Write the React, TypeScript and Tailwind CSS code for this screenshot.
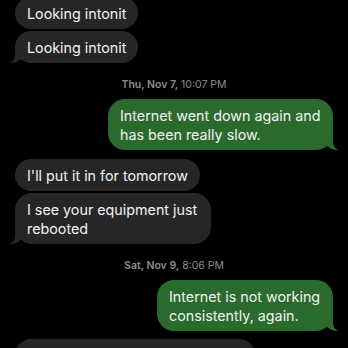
import React from 'react';

type Msg =
  | { kind: 'in' | 'out'; text: string; tail?: boolean; gap?: string; w?: string }
  | { kind: 'time'; day: string; time: string; gap?: string };

const messages: Msg[] = [
  { kind: 'in', text: 'Looking intonit' },
  { kind: 'in', text: 'Looking intonit', tail: true, gap: 'mt-[2px]' },
  { kind: 'time', day: 'Thu, Nov 7,', time: '10:07 PM', gap: 'mt-[15px]' },
  { kind: 'out', text: 'Internet went down again and has been really slow.', tail: true, gap: 'mt-[7px]', w: 'w-[225px]' },
  { kind: 'in', text: "I'll put it in for tomorrow", gap: 'mt-[9px]' },
  { kind: 'in', text: 'I see your equipment just rebooted', tail: true, gap: 'mt-[2px]', w: 'w-[196px]' },
  { kind: 'time', day: 'Sat, Nov 9,', time: '8:06 PM', gap: 'mt-[15px]' },
  { kind: 'out', text: 'Internet is not working consistently, again.', tail: true, gap: 'mt-[7px]', w: 'w-[176px]' },
];

const TailLeft = () => (
  <svg className="absolute -left-[5px] bottom-0 h-[16px] w-[16px]" viewBox="0 0 16 16">
    <path d="M5 0 L5 8 C5 12 3 14 0 16 C5 16 9 14 12 11 L16 0 Z" fill="#262628" />
  </svg>
);

const TailRight = () => (
  <svg className="absolute -right-[5px] bottom-0 h-[16px] w-[16px]" viewBox="0 0 16 16">
    <path d="M11 0 L11 8 C11 12 13 14 16 16 C11 16 7 14 4 11 L0 0 Z" fill="#2b6a2d" />
  </svg>
);

export default function App() {
  return (
    <div
      className="h-[348px] w-[348px] overflow-hidden bg-black"
      style={{ fontFamily: 'Inter, "Noto Sans", sans-serif' }}
    >
      <div className="-mt-[3px] flex flex-col px-[15px]">
        {messages.map((m, i) => {
          if (m.kind === 'time') {
            return (
              <div key={i} className={`${m.gap} text-center text-[10.5px] leading-[14px] text-[#8d8d92]`}>
                <span className="font-semibold">{m.day}</span> {m.time}
              </div>
            );
          }
          const out = m.kind === 'out';
          return (
            <div key={i} className={`${m.gap ?? ''} flex ${out ? 'justify-end' : 'justify-start'}`}>
              <div
                className={`relative ${m.w ?? 'max-w-[226px]'} rounded-[17px] px-[12px] py-[6.5px] text-[14.3px] leading-[19px] text-[#f2f2f2] ${
                  out ? 'bg-[#2b6a2d]' : 'bg-[#262628]'
                }`}
              >
                {m.tail && (out ? <TailRight /> : <TailLeft />)}
                <span className="relative">{m.text}</span>
              </div>
            </div>
          );
        })}
        {/* next incoming bubble, only its top edge is in view */}
        <div className="mt-[8px] flex">
          <div className="h-[32px] w-[240px] rounded-[17px] bg-[#262628]" />
        </div>
      </div>
    </div>
  );
}
